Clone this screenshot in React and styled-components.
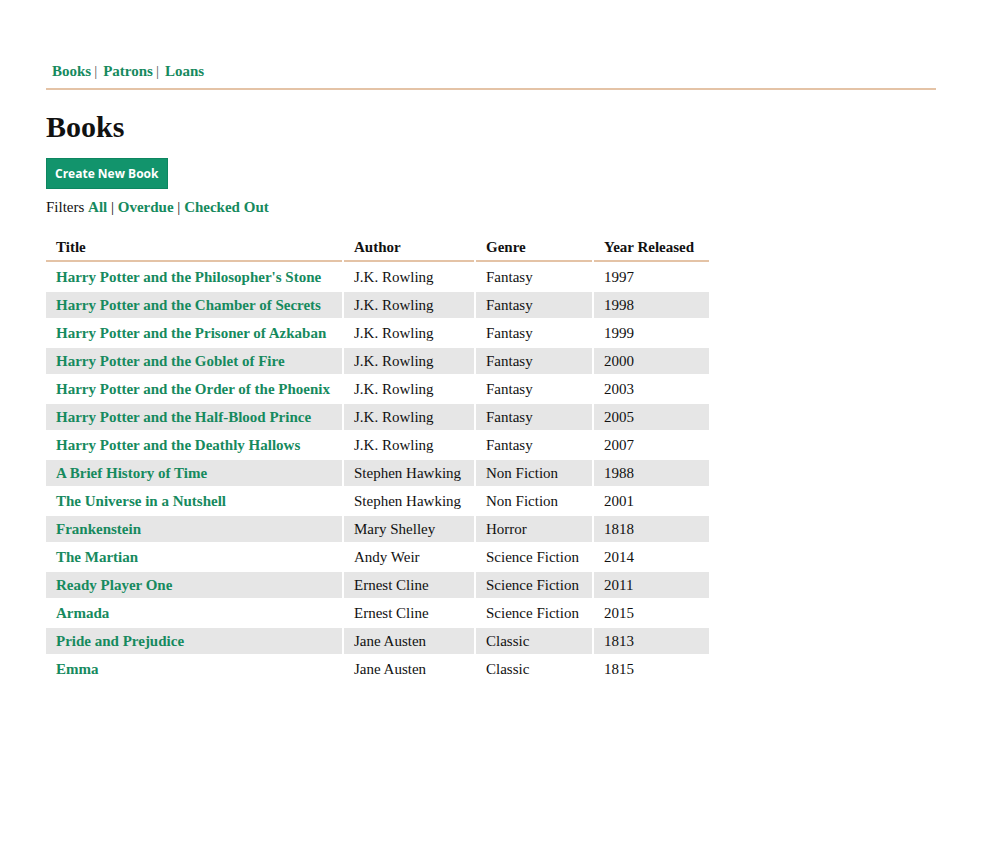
import styled, { createGlobalStyle } from 'styled-components';

const GlobalStyle = createGlobalStyle`
  body {
    margin: 0;
    background: #fff;
    color: #111;
    font-family: "Liberation Serif", "Times New Roman", serif;
    font-size: 15px;
  }
`;

const Page = styled.div`
  width: 890px;
  margin: 0 auto;
  padding-top: 63px;
`;

const Nav = styled.nav`
  display: flex;
  align-items: center;
  padding: 0 6px 8px;
  border-bottom: 2px solid #e4c3a6;
  font-weight: bold;
`;

const NavLink = styled.a`
  color: #168a5e;
  text-decoration: none;
  cursor: pointer;
`;

const Sep = styled.span`
  color: #555;
  font-weight: normal;
  margin: 0 6px 0 3px;
`;

const Heading = styled.h1`
  font-size: 30px;
  margin: 20px 0 14px;
`;

const Button = styled.button`
  font-family: "Open Sans", "Noto Sans", sans-serif;
  font-weight: bold;
  font-size: 12px;
  color: #fff;
  background: #12946c;
  border: 1px solid #0d8660;
  height: 31px;
  padding: 0 9px 0 8px;
  cursor: pointer;
`;

const Filters = styled.p`
  margin: 10px 0 17px;
`;

const FilterLink = styled(NavLink)`
  font-weight: bold;
`;

const Table = styled.table`
  border-spacing: 2px;
  margin-left: -2px;
`;

const Th = styled.th`
  text-align: left;
  width: ${p => p.w}px;
  padding: 4px 10px 4px;
  border-bottom: 2px solid #e4c3a6;
`;

const Row = styled.tr`
  background: ${p => (p.striped ? '#e6e6e6' : 'transparent')};
`;

const Td = styled.td`
  padding: 4px 9px 4px 10px;
  height: 18px;
`;

const TitleLink = styled(NavLink)`
  font-weight: bold;
`;

const books = [
  ["Harry Potter and the Philosopher's Stone", 'J.K. Rowling', 'Fantasy', 1997],
  ['Harry Potter and the Chamber of Secrets', 'J.K. Rowling', 'Fantasy', 1998],
  ['Harry Potter and the Prisoner of Azkaban', 'J.K. Rowling', 'Fantasy', 1999],
  ['Harry Potter and the Goblet of Fire', 'J.K. Rowling', 'Fantasy', 2000],
  ['Harry Potter and the Order of the Phoenix', 'J.K. Rowling', 'Fantasy', 2003],
  ['Harry Potter and the Half-Blood Prince', 'J.K. Rowling', 'Fantasy', 2005],
  ['Harry Potter and the Deathly Hallows', 'J.K. Rowling', 'Fantasy', 2007],
  ['A Brief History of Time', 'Stephen Hawking', 'Non Fiction', 1988],
  ['The Universe in a Nutshell', 'Stephen Hawking', 'Non Fiction', 2001],
  ['Frankenstein', 'Mary Shelley', 'Horror', 1818],
  ['The Martian', 'Andy Weir', 'Science Fiction', 2014],
  ['Ready Player One', 'Ernest Cline', 'Science Fiction', 2011],
  ['Armada', 'Ernest Cline', 'Science Fiction', 2015],
  ['Pride and Prejudice', 'Jane Austen', 'Classic', 1813],
  ['Emma', 'Jane Austen', 'Classic', 1815],
];

export default function App() {
  return (
    <>
      <GlobalStyle />
      <Page>
        <Nav>
          <NavLink>Books</NavLink>
          <Sep>|</Sep>
          <NavLink>Patrons</NavLink>
          <Sep>|</Sep>
          <NavLink>Loans</NavLink>
        </Nav>
        <Heading>Books</Heading>
        <Button>Create New Book</Button>
        <Filters>
          Filters <FilterLink>All</FilterLink> | <FilterLink>Overdue</FilterLink> |{' '}
          <FilterLink>Checked Out</FilterLink>
        </Filters>
        <Table>
          <thead>
            <tr>
              <Th w={276}>Title</Th>
              <Th w={110}>Author</Th>
              <Th w={96}>Genre</Th>
              <Th w={95}>Year Released</Th>
            </tr>
          </thead>
          <tbody>
            {books.map(([title, author, genre, year], i) => (
              <Row key={title} striped={i % 2 === 1}>
                <Td><TitleLink>{title}</TitleLink></Td>
                <Td>{author}</Td>
                <Td>{genre}</Td>
                <Td>{year}</Td>
              </Row>
            ))}
          </tbody>
        </Table>
      </Page>
    </>
  );
}
